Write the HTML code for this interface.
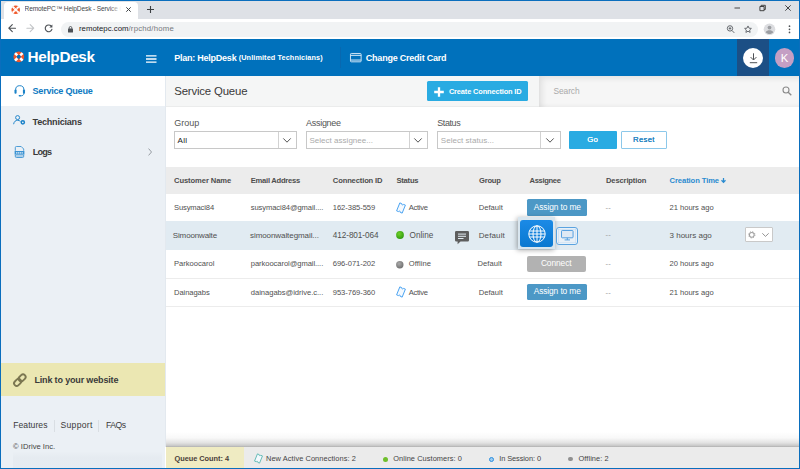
<!DOCTYPE html>
<html lang="en">
<head>
<meta charset="utf-8">
<title>RemotePC HelpDesk - Service Queue</title>
<style>
*{box-sizing:border-box;margin:0;padding:0}
html,body{width:800px;height:469px;overflow:hidden;background:#0a6ebd}
body{font-family:"Liberation Sans",sans-serif;font-size:8px;color:#444;position:relative}
.a{position:absolute}
.t{position:absolute;white-space:nowrap;line-height:1.15}
svg{position:absolute;overflow:visible}
#win{left:1px;top:1px;width:798px;height:467px;background:#fff;overflow:hidden}
/* browser chrome */
#tabstrip{left:0;top:0;width:798px;height:17.5px;background:#dee1e6}
#tab{left:3px;top:1px;width:134px;height:17px;background:#fff;border-radius:4px 4px 0 0}
#toolbar{left:0;top:17.5px;width:798px;height:20.5px;background:#fff}
#omni{left:60px;top:20.5px;width:697px;height:15px;border-radius:8px;background:#f1f3f4}
/* app header */
#hdr{left:0;top:38px;width:798px;height:37px;background:#0071bc}
#dl{left:736px;top:38px;width:32px;height:37px;background:#1c4f85}
#dlc{left:742px;top:47.400px;width:20px;height:20px;border-radius:50%;background:#fff}
#av{left:773.800px;top:47px;width:19.400px;height:19.600px;border-radius:50%;background:#c49fc4}
#hsep{left:339.300px;top:46px;width:1px;height:21px;background:#0868b0}
/* sidebar */
#side{left:0;top:75px;width:164px;height:392px;background:#ebf0f5}
#sel{left:0;top:75px;width:164px;height:30px;background:#fff}
#link{left:0;top:362.1px;width:164.2px;height:33px;background:#ebe7b2}
.vsep{width:1px;height:12px;background:#d9dee3;top:418.5px}
/* main */
#main{left:164px;top:75px;width:634px;height:392px;background:#fff}
#mborder{left:164.2px;top:75px;width:1px;height:371px;background:#e3e9ef}
#tbar{left:165px;top:75px;width:633px;height:30.5px;background:#f5f6f6 radial-gradient(rgba(0,0,0,.03) .5px,transparent .7px) 0 0/2px 2px;border-bottom:1px solid #ebecec}
#create{left:426px;top:80.3px;width:101.200px;height:20.200px;background:#29abe2;border-radius:1.5px}
#search{left:537.5px;top:75px;width:261px;height:30.5px;background:#f6f6f6;box-shadow:inset 4px 3px 6px -1px rgba(0,0,0,.09),inset 0 -2px 4px -1px rgba(0,0,0,.05)}
.sel{height:17.600px;top:130px;border:1px solid #c8c8c8;background:#fff}
.sel i{position:absolute;top:0;bottom:0;width:1px;background:#d2d2d2}
#go{left:568px;top:130px;width:48px;height:18px;background:#29abe2;border-radius:1px}
#reset{left:619.5px;top:130px;width:46.5px;height:18px;background:#fff;border:1px solid #8cc8ea;border-radius:1px}
#thead{left:164.8px;top:165.900px;width:633.2px;height:26.700px;background:#ececec radial-gradient(rgba(255,255,255,.25) .5px,transparent .7px) 0 0/2px 2px}
.row{left:164.8px;width:633.2px;border-bottom:1px solid #ececec}
#row2{left:164px;top:220.3px;width:634px;height:28.7px;background:#e1ebf2}
.btn{height:17px;border-radius:1.5px}
.assign{background:#4c98c6;left:526px;width:60px}
#connect{background:#b2b2b2;left:526.3px;width:59px;top:254.9px;height:16px;border-radius:2px}
#globehl{left:516.5px;top:216px;width:37.5px;height:32px;background:#d9e6ef;box-shadow:-1px 1px 5px rgba(0,0,0,.35)}
#globe{left:519px;top:219px;width:33px;height:27px;border-radius:3px;background:linear-gradient(#1b8ae6,#0a78d0)}
#mon{left:555.2px;top:225.8px;width:21.8px;height:18px;border-radius:3px;border:1px solid #5ba3e0;background:#e9f0f7;box-shadow:inset 0 0 0 .8px #f4f8fc,inset 0 0 0 1.6px #c3dcf3}
#gear{left:744.2px;top:226.2px;width:27.800px;height:14.600px;border:1px solid #c9c9c9;background:#fff;border-radius:1px}
/* status bar */
#sbshadow{left:164.5px;top:431px;width:634px;height:15px;background:linear-gradient(rgba(120,120,120,0),rgba(120,120,120,.05) 40%,rgba(110,110,110,.2) 72%,rgba(100,100,100,.34) 90%,rgba(90,90,90,.48))}
#sbar{left:164.5px;top:445.8px;width:634px;height:21.2px;background:#ebebeb}
#qc{left:164.5px;top:445.8px;width:78.8px;height:21.2px;background:#efebc2}
.dot{width:5px;height:5px;border-radius:50%}
</style>
</head>
<body>
<div id="win" class="a">
  <div id="tabstrip" class="a"></div>
  <div id="tab" class="a"></div>
  <div id="toolbar" class="a"></div>
  <div id="omni" class="a"></div>
  <div class="a" style="z-index:3;left:108px;top:3px;width:14px;height:13px;background:linear-gradient(90deg,rgba(255,255,255,0),#fff 90%)"></div>
    <!-- favicon lifebuoy -->
  <svg style="left:9.700px;top:3.900px" width="9.400" height="9.400" viewBox="-4.700 -4.700 9.400 9.400"><circle r="3" fill="#fff" stroke="#f0592a" stroke-width="2.600"/><path d="M1.20 1.20L3.08 3.08M-1.20 1.20L-3.08 3.08M-1.20 -1.20L-3.08 -3.08M1.20 -1.20L3.08 -3.08" stroke="#fff" stroke-width="1.900" fill="none"/></svg>
  <!-- tab close -->
  <svg style="left:125.300px;top:5.900px" width="5" height="5" viewBox="0 0 5 5"><path d="M.3.3 4.7 4.7M4.7.3.3 4.7" stroke="#3c4043" stroke-width="1" fill="none"/></svg>
  <!-- new tab plus -->
  <svg style="left:145.800px;top:4.900px" width="7" height="7" viewBox="0 0 7 7"><path d="M3.5 0V7M0 3.5H7" stroke="#3c4043" stroke-width="1.1" fill="none"/></svg>
  <!-- window controls -->
  <svg style="left:731px;top:2px" width="62" height="10" viewBox="0 0 62 10"><g fill="none" stroke="#333" stroke-width=".9"><path d="M2.5 5H8"/><path d="M27.9 3.5h4.2v4.2H27.900zM29.100 3.500V2.300h4.200v4.200h-1.200"/><path d="M53.3 2.3l5.4 5.4M58.700 2.3l-5.400 5.400"/></g></svg>
  <!-- back / forward / reload -->
  <svg style="left:7px;top:23px" width="46" height="9" viewBox="0 0 46 9"><g fill="none" stroke-width="1.15" stroke-linecap="round" stroke-linejoin="round"><path d="M7.500 4.200H.9M4.300 .7.800 4.200l3.500 3.500" stroke="#4d5156"/><path d="M18.900 4.200H25.600M22.200 .7l3.500 3.500-3.500 3.500" stroke="#c3c5c8"/><path d="M43.300 2.200A3.400 3.400 0 1 0 43.900 5.400" stroke="#4d5156"/></g><path d="M44.400 .5V3.500H41.400z" fill="#4d5156"/></svg>
  <!-- lock -->
  <svg style="left:66.600px;top:24.800px" width="5" height="7" viewBox="0 0 5 7"><rect x="0" y="2.600" width="5" height="4" rx=".6" fill="#4d5156"/><path d="M1.200 2.800V1.800a1.300 1.300 0 0 1 2.600 0v1" fill="none" stroke="#4d5156" stroke-width=".9"/></svg>
  <!-- zoom, star, profile, menu -->
  <svg style="left:724px;top:22px" width="72" height="13" viewBox="0 0 72 13"><g fill="none" stroke="#5f6368" stroke-width=".95"><circle cx="5" cy="5.400" r="2.700"/><path d="M7 7.500 9.300 9.900M3.700 5.400H6.300M5 4.100V6.700"/><path transform="translate(23 6.200) scale(.88) translate(-23 -6)" d="M23 2.300l1.150 2.500 2.700.3-2 1.850.55 2.700L23 8.300l-2.400 1.350.55-2.700-2-1.850 2.700-.3z" stroke-linejoin="round" stroke-width="1.050"/></g><circle cx="44.500" cy="6.300" r="5.800" fill="#dcdde0"/><circle cx="44.500" cy="4.600" r="1.900" fill="#9c9ea2"/><path d="M40.700 9.200c.8-1.500 2.200-2 3.800-2s3 .5 3.800 2c-1 1.200-2.300 1.800-3.800 1.800s-2.800-.6-3.800-1.800z" fill="#9c9ea2"/><g fill="#4d5156"><circle cx="64.500" cy="3.200" r=".85"/><circle cx="64.500" cy="6.300" r=".85"/><circle cx="64.500" cy="9.400" r=".85"/></g></svg>

  <div id="hdr" class="a"></div>
  <div id="dl" class="a"></div>
  <div id="dlc" class="a"></div>
  <div id="av" class="a"></div>
  <div id="hsep" class="a"></div>
    <!-- logo lifebuoy -->
  <svg style="left:12.100px;top:49.950px" width="11.600" height="11.600" viewBox="-5.800 -5.800 11.600 11.600"><circle r="3.700" fill="none" stroke="#f0562a" stroke-width="3.300"/><path d="M1.45 1.45L3.78 3.78M-1.45 1.45L-3.78 3.78M-1.45 -1.45L-3.78 -3.78M1.45 -1.45L3.78 -3.78" stroke="#fff" stroke-width="2.500" fill="none"/></svg>
  <!-- hamburger -->
  <svg style="left:145px;top:54px" width="11" height="8" viewBox="0 0 11 8"><path d="M0 .8H10.500M0 4H10.500M0 7.200H10.500" stroke="#fff" stroke-width="1.300" fill="none"/></svg>
  <!-- credit card -->
  <svg style="left:349.200px;top:52.200px" width="11.600" height="9.300" viewBox="0 0 12.500 10"><rect x=".5" y=".5" width="11.500" height="9" rx=".9" fill="none" stroke="#d9ebf8" stroke-width="1"/><path d="M.5 2.500H12" stroke="#d9ebf8" stroke-width="1.100"/><path d="M.5 7.600H12" stroke="#b5d6ef" stroke-width="1.300"/></svg>
  <!-- download -->
  <svg style="left:747.500px;top:51.500px" width="9" height="11" viewBox="0 0 9 11"><path d="M4.500 .3V6.800M1.600 4.100 4.500 7 7.400 4.100M.8 9.700H8.200" fill="none" stroke="#46494d" stroke-width=".95"/></svg>

  <div id="side" class="a"></div>
  <div id="sel" class="a"></div>
  <div id="link" class="a"></div>
  <div class="a" style="left:12px;top:450px;width:149px;height:17px;background:linear-gradient(rgba(0,0,0,0),rgba(40,60,90,.028) 40%)"></div>
  <div class="a vsep" style="left:52.9px"></div>
  <div class="a vsep" style="left:97.400px"></div>
    <!-- headset -->
  <svg style="left:12.600px;top:84.200px" width="11.500" height="12" viewBox="0 0 12 12.500"><path d="M1.700 5.600V5A4.300 4.300 0 0 1 10.300 5v.6" fill="none" stroke="#1a82c8" stroke-width="1"/><rect x=".5" y="4.600" width="2.200" height="4.400" rx="1" fill="#1a82c8"/><rect x="9.300" y="4.600" width="2.200" height="4.400" rx="1" fill="#1a82c8"/><path d="M10.300 8.600c0 1.800-1.200 2.700-3.300 2.800" fill="none" stroke="#1a82c8" stroke-width=".9"/><rect x="4.800" y="10.500" width="2.600" height="1.600" rx=".8" fill="#1a82c8"/></svg>
  <!-- technicians -->
  <svg style="left:12.300px;top:114px" width="13" height="10" viewBox="0 0 13 10"><g fill="none" stroke="#1a82c8"><circle cx="4.600" cy="2.600" r="2" stroke-width=".95"/><path d="M.6 9.200C1.100 6.400 2.700 5.300 4.600 5.300c1.200 0 2.100.4 2.800 1.100" stroke-width=".95"/><circle cx="9.800" cy="7.300" r="1.600" stroke-width="1.500"/></g></svg>
  <!-- logs -->
  <svg style="left:12.500px;top:144.800px" width="11" height="12" viewBox="0 0 11 12"><path d="M1.300 4.800V1.600Q1.300 .5 2.400 .5H7.200L9.700 3V4.800M9.700 9v1.400q0 1.100-1.100 1.100H2.400q-1.100 0-1.100-1.100V9" fill="none" stroke="#3b93d3" stroke-width=".9"/><rect x=".6" y="5" width="9.800" height="3.700" fill="#3b93d3"/><path d="M1.300 10H9.700" stroke="#3b93d3" stroke-width=".7"/><path d="M2 6.850H9" stroke="#e6f0f8" stroke-width="1.300" stroke-dasharray="1.300 .55"/></svg>
  <!-- chevron -->
  <svg style="left:146.800px;top:146.800px" width="4" height="8" viewBox="0 0 4 8"><path d="M.6 .6 3.500 4 .6 7.400" fill="none" stroke="#8d9399" stroke-width=".9"/></svg>
  <!-- link -->
  <svg style="left:12px;top:371.500px" width="13" height="14" viewBox="0 0 13 14"><g fill="none" stroke="#7b7651" stroke-width="1.850"><rect x="-2.600" y="-3.900" width="5.200" height="7.800" rx="2.600" transform="translate(9.100 4.900) rotate(45)"/><rect x="-2.600" y="-3.900" width="5.200" height="7.800" rx="2.600" transform="translate(4.600 9.400) rotate(45)"/></g></svg>

  <div id="main" class="a"></div>
  <div id="tbar" class="a"></div>
  <div id="search" class="a"></div>
  <div id="create" class="a"></div>
  <div class="a sel" style="left:173px;width:122.800px"><i style="left:103px"></i></div>
  <div class="a sel" style="left:304.5px;width:122.300px"><i style="left:102.600px"></i></div>
  <div class="a sel" style="left:435.5px;width:124px"><i style="left:102.600px"></i></div>
  <div id="go" class="a"></div>
  <div id="reset" class="a"></div>
  <div id="thead" class="a"></div>
  <div class="a row" style="top:193px;height:28px"></div>
  <div class="a row" style="top:249px;height:28.5px"></div>
  <div class="a row" style="top:277.5px;height:28.5px"></div>
  <div id="row2" class="a"></div>
  <div id="mborder" class="a"></div>
  <div class="a btn assign" style="top:198px;height:16.8px"></div>
  <div class="a btn assign" style="top:282.6px;height:16.9px"></div>
  <div id="connect" class="a btn"></div>
  <div id="globehl" class="a"></div>
  <div id="globe" class="a"></div>
  <div id="mon" class="a"></div>
  <div id="gear" class="a"></div>
  <div id="sbshadow" class="a"></div>
  <div id="sbar" class="a"></div>
  <div id="qc" class="a"></div>
  <div class="a dot" style="left:382px;top:455.5px;background:#6fbf2c"></div>
  <div class="a dot" style="left:488px;top:455.5px;border:1.700px solid #2a8fe0;background:#9ccbf0"></div>
  <div class="a dot" style="left:567.200px;top:455.700px;width:4.500px;height:4.500px;background:#909090"></div>
    <!-- plus -->
  <svg style="left:432.500px;top:85.500px" width="10" height="10" viewBox="0 0 10 10"><path d="M5 .2V9.800M.2 5H9.800" stroke="#fff" stroke-width="2.300" fill="none"/></svg>
  <!-- magnifier -->
  <svg style="left:780.700px;top:85.300px" width="10" height="10" viewBox="0 0 10 10"><circle cx="4" cy="4" r="3" fill="none" stroke="#8a8a8a" stroke-width="1.100"/><path d="M6.200 6.200 9.300 9.300" stroke="#8a8a8a" stroke-width="1.300"/></svg>
  <!-- select chevrons -->
  <svg style="left:282px;top:137px" width="8" height="5" viewBox="0 0 8 5"><path d="M.3 .4 4 4.200 7.700 .4" fill="none" stroke="#555" stroke-width="1"/></svg>
  <svg style="left:413.200px;top:137px" width="8" height="5" viewBox="0 0 8 5"><path d="M.3 .4 4 4.200 7.700 .4" fill="none" stroke="#555" stroke-width="1"/></svg>
  <svg style="left:545px;top:137px" width="8" height="5" viewBox="0 0 8 5"><path d="M.3 .4 4 4.200 7.700 .4" fill="none" stroke="#555" stroke-width="1"/></svg>
  <!-- sort arrow -->
  <svg style="left:720.400px;top:176.700px" width="5" height="5" viewBox="0 0 5 5"><path d="M2.500 0V4.300M.5 2.300 2.500 4.400 4.500 2.300" fill="none" stroke="#2a8bd0" stroke-width="1.250"/></svg>
  <!-- active icons -->
  <svg style="left:394.600px;top:201.600px" width="10" height="10" viewBox="0 0 10 10"><g transform="translate(5 5) rotate(22)"><path d="M-3-4.300H-.9A.9 .9 0 0 0 .9-4.300H3V4.300H.9A.9 .9 0 0 0-.9 4.300H-3z" fill="#f4f9fe" stroke="#3f9ef0" stroke-width=".85" stroke-linejoin="round"/></g></svg>
  <svg style="left:394.500px;top:286px" width="10" height="10" viewBox="0 0 10 10"><g transform="translate(5 5) rotate(22)"><path d="M-3-4.300H-.9A.9 .9 0 0 0 .9-4.300H3V4.300H.9A.9 .9 0 0 0-.9 4.300H-3z" fill="#f4f9fe" stroke="#3f9ef0" stroke-width=".85" stroke-linejoin="round"/></g></svg>
  <svg style="left:253px;top:453px" width="9" height="9" viewBox="0 0 10 10"><g transform="translate(5 5) rotate(22)"><path d="M-3-4.300H-.9A.9 .9 0 0 0 .9-4.300H3V4.300H.9A.9 .9 0 0 0-.9 4.300H-3z" fill="#f4f9fe" stroke="#4fb3ad" stroke-width=".85" stroke-linejoin="round"/></g></svg>
  <!-- status dots -->
  <svg style="left:395px;top:230.300px" width="8" height="8" viewBox="0 0 8 8"><defs><radialGradient id="gg" cx=".4" cy=".35" r=".7"><stop offset="0" stop-color="#6fd02a"/><stop offset="1" stop-color="#2f9a10"/></radialGradient><radialGradient id="gr" cx=".4" cy=".35" r=".7"><stop offset="0" stop-color="#aaa"/><stop offset="1" stop-color="#6c6c6c"/></radialGradient></defs><circle cx="4" cy="4" r="3.900" fill="url(#gg)"/></svg>
  <svg style="left:395.300px;top:259.500px" width="7.600" height="7.600" viewBox="0 0 8 8"><circle cx="4" cy="4" r="3.900" fill="url(#gr)"/></svg>
  <!-- chat -->
  <svg style="left:454.200px;top:230px" width="14" height="14" viewBox="0 0 14 14"><path d="M1.200 0H12.800Q14 0 14 1.200V9.300Q14 10.500 12.800 10.500H5.500L2.600 13.300V10.500H1.200Q0 10.500 0 9.300V1.200Q0 0 1.200 0z" fill="#5e5e5e"/><path d="M3 3.100H11M3 5.300H11M3 7.500H8.500" stroke="#e1ebf2" stroke-width="1"/></svg>
  <!-- globe -->
  <svg style="left:526.500px;top:223.500px" width="18" height="18" viewBox="-9 -9 18 18"><g fill="none" stroke="#fff" stroke-width="1"><circle r="8.200"/><ellipse rx="4" ry="8.200"/><path d="M0-8V8M-8 0H8M-7.500-3H7.500M-7.500 3H7.500"/></g></svg>
  <!-- monitor -->
  <svg style="left:559.600px;top:229.200px" width="12.600" height="10.600" viewBox="0 0 13 11"><rect x=".5" y=".5" width="12" height="7.600" rx=".8" fill="#dfe9f4" stroke="#3f93dc" stroke-width=".9"/><path d="M6.500 8.200V10.200M3.700 10.300H9.300" stroke="#3f93dc" stroke-width=".9" fill="none"/></svg>
  <!-- gear + chevron -->
  <svg style="left:747px;top:230.100px" width="7.600" height="7.600" viewBox="-4 -4 8 8"><circle r="2.500" fill="none" stroke="#a0a0a0" stroke-width="1.100"/><circle r="3.300" fill="none" stroke="#a0a0a0" stroke-width="1" stroke-dasharray="1.300 1.290"/></svg>
  <svg style="left:761.200px;top:232.300px" width="7" height="4" viewBox="0 0 7 4"><path d="M.3 .3 3.500 3.400 6.700 .3" fill="none" stroke="#777" stroke-width=".8"/></svg>

<span class="t" id="t0" style="left:23.50px;top:4.30px;font-size:6.60px;font-weight:400;color:#45484c;letter-spacing:-0.136px;overflow:hidden;width:98px;">RemotePC™ HelpDesk - Service Q</span>
<span class="t" id="t1" style="left:78.00px;top:24.41px;font-size:7.80px;font-weight:400;color:#202124;letter-spacing:0.008px;">remotepc.com</span>
<span class="t" id="t2" style="left:127.50px;top:24.41px;font-size:7.80px;font-weight:400;color:#75787c;letter-spacing:0.196px;">/rpchd/home</span>
<span class="t" id="t3" style="left:26.50px;top:46.90px;font-size:15.30px;font-weight:700;color:#fff;letter-spacing:-0.312px;">HelpDesk</span>
<span class="t" id="t4" style="left:173.20px;top:52.12px;font-size:9.00px;font-weight:700;color:#fff;letter-spacing:-0.236px;">Plan: HelpDesk</span>
<span class="t" id="t5" style="left:237.70px;top:53.40px;font-size:7.30px;font-weight:700;color:#fff;letter-spacing:0.100px;">(Unlimited Technicians)</span>
<span class="t" id="t6" style="left:364.80px;top:52.12px;font-size:9.00px;font-weight:700;color:#fff;letter-spacing:-0.222px;">Change Credit Card</span>
<span class="t" id="t7" style="left:779.80px;top:50.80px;font-size:11.30px;font-weight:400;color:#fff;letter-spacing:-0.500px;">K</span>
<span class="t" id="t8" style="left:31.50px;top:85.47px;font-size:9.10px;font-weight:700;color:#0d79c2;letter-spacing:-0.245px;">Service Queue</span>
<span class="t" id="t9" style="left:31.50px;top:116.07px;font-size:9.10px;font-weight:700;color:#3a3a3a;letter-spacing:-0.245px;">Technicians</span>
<span class="t" id="t10" style="left:31.75px;top:146.37px;font-size:9.10px;font-weight:700;color:#3a3a3a;letter-spacing:-0.812px;">Logs</span>
<span class="t" id="t11" style="left:33.40px;top:373.82px;font-size:9.00px;font-weight:700;color:#3a3a3a;letter-spacing:-0.156px;">Link to your website</span>
<span class="t" id="t12" style="left:12.20px;top:419.56px;font-size:8.60px;font-weight:400;color:#3a3a3a;letter-spacing:0.050px;">Features</span>
<span class="t" id="t13" style="left:59.50px;top:419.56px;font-size:8.60px;font-weight:400;color:#3a3a3a;letter-spacing:0.299px;">Support</span>
<span class="t" id="t14" style="left:104.90px;top:419.56px;font-size:8.60px;font-weight:400;color:#3a3a3a;letter-spacing:-0.475px;">FAQs</span>
<span class="t" id="t15" style="left:12.10px;top:441.83px;font-size:7.60px;font-weight:400;color:#444;letter-spacing:0.008px;">© IDrive Inc.</span>
<span class="t" id="t16" style="left:173.30px;top:83.65px;font-size:11.40px;font-weight:400;color:#3a3a3a;letter-spacing:-0.181px;">Service Queue</span>
<span class="t" id="t17" style="left:447.90px;top:87.05px;font-size:7.40px;font-weight:700;color:#fff;letter-spacing:-0.128px;">Create Connection ID</span>
<span class="t" id="t18" style="left:552.50px;top:85.57px;font-size:8.40px;font-weight:400;color:#a9a9a9;letter-spacing:-0.083px;">Search</span>
<span class="t" id="t19" style="left:173.30px;top:117.12px;font-size:9.00px;font-weight:400;color:#555;letter-spacing:-0.043px;">Group</span>
<span class="t" id="t20" style="left:305.00px;top:117.12px;font-size:9.00px;font-weight:400;color:#555;letter-spacing:-0.279px;">Assignee</span>
<span class="t" id="t21" style="left:436.20px;top:117.12px;font-size:9.00px;font-weight:400;color:#555;letter-spacing:-0.400px;">Status</span>
<span class="t" id="t22" style="left:176.60px;top:134.84px;font-size:8.10px;font-weight:400;color:#222;letter-spacing:0.200px;">All</span>
<span class="t" id="t23" style="left:308.50px;top:134.70px;font-size:8.00px;font-weight:400;color:#aaa;letter-spacing:0.019px;">Select assignee...</span>
<span class="t" id="t24" style="left:439.80px;top:134.70px;font-size:8.00px;font-weight:400;color:#aaa;letter-spacing:0.046px;">Select status...</span>
<span class="t" id="t25" style="left:586.30px;top:134.51px;font-size:7.80px;font-weight:400;color:#fff;letter-spacing:0.247px;text-shadow:0 0 .4px #fff;">Go</span>
<span class="t" id="t26" style="left:632.00px;top:134.51px;font-size:7.80px;font-weight:400;color:#1f7fc0;letter-spacing:0.285px;text-shadow:0 0 .3px #1f7fc0;">Reset</span>
<span class="t" id="t27" style="left:173.00px;top:175.93px;font-size:7.60px;font-weight:700;color:#4e4e4e;letter-spacing:-0.081px;">Customer Name</span>
<span class="t" id="t28" style="left:249.80px;top:175.93px;font-size:7.60px;font-weight:700;color:#4e4e4e;letter-spacing:-0.253px;">Email Address</span>
<span class="t" id="t29" style="left:331.80px;top:175.93px;font-size:7.60px;font-weight:700;color:#4e4e4e;letter-spacing:-0.144px;">Connection ID</span>
<span class="t" id="t30" style="left:395.40px;top:175.93px;font-size:7.60px;font-weight:700;color:#4e4e4e;letter-spacing:-0.203px;">Status</span>
<span class="t" id="t31" style="left:478.00px;top:175.93px;font-size:7.60px;font-weight:700;color:#4e4e4e;letter-spacing:-0.240px;">Group</span>
<span class="t" id="t32" style="left:528.60px;top:175.93px;font-size:7.60px;font-weight:700;color:#4e4e4e;letter-spacing:-0.350px;">Assignee</span>
<span class="t" id="t33" style="left:605.00px;top:175.93px;font-size:7.60px;font-weight:700;color:#4e4e4e;letter-spacing:-0.145px;">Description</span>
<span class="t" id="t34" style="left:668.60px;top:175.93px;font-size:7.60px;font-weight:700;color:#2a8bd0;letter-spacing:-0.085px;">Creation Time</span>
<span class="t" id="t35" style="left:173.00px;top:203.23px;font-size:7.60px;font-weight:400;color:#505050;letter-spacing:-0.138px;">Susymaci84</span>
<span class="t" id="t36" style="left:249.80px;top:203.23px;font-size:7.60px;font-weight:400;color:#505050;letter-spacing:-0.100px;">susymaci84@gmail....</span>
<span class="t" id="t37" style="left:331.80px;top:203.23px;font-size:7.60px;font-weight:400;color:#505050;letter-spacing:-0.062px;">162-385-559</span>
<span class="t" id="t38" style="left:407.80px;top:203.23px;font-size:7.60px;font-weight:400;color:#505050;letter-spacing:-0.300px;">Active</span>
<span class="t" id="t39" style="left:477.70px;top:203.23px;font-size:7.60px;font-weight:400;color:#505050;letter-spacing:0.034px;">Default</span>
<span class="t" id="t40" style="left:532.80px;top:202.07px;font-size:8.40px;font-weight:400;color:#fff;letter-spacing:-0.118px;">Assign to me</span>
<span class="t" id="t41" style="left:604.60px;top:203.23px;font-size:7.60px;font-weight:400;color:#999;letter-spacing:0.169px;">--</span>
<span class="t" id="t42" style="left:668.50px;top:203.23px;font-size:7.60px;font-weight:400;color:#505050;letter-spacing:-0.020px;">21 hours ago</span>
<span class="t" id="t43" style="left:171.80px;top:229.80px;font-size:8.00px;font-weight:400;color:#505050;letter-spacing:-0.145px;">Simoonwalte</span>
<span class="t" id="t44" style="left:249.00px;top:229.80px;font-size:8.00px;font-weight:400;color:#505050;letter-spacing:-0.076px;">simoonwaltegmail...</span>
<span class="t" id="t45" style="left:331.80px;top:229.69px;font-size:8.20px;font-weight:400;color:#505050;letter-spacing:-0.076px;">412-801-064</span>
<span class="t" id="t46" style="left:408.60px;top:229.69px;font-size:8.20px;font-weight:400;color:#505050;letter-spacing:0.000px;">Online</span>
<span class="t" id="t47" style="left:477.70px;top:229.80px;font-size:8.00px;font-weight:400;color:#505050;letter-spacing:0.134px;">Default</span>
<span class="t" id="t48" style="left:604.60px;top:230.03px;font-size:7.60px;font-weight:400;color:#999;letter-spacing:0.169px;">--</span>
<span class="t" id="t49" style="left:668.50px;top:229.80px;font-size:8.00px;font-weight:400;color:#505050;letter-spacing:0.003px;">3 hours ago</span>
<span class="t" id="t50" style="left:173.00px;top:259.23px;font-size:7.60px;font-weight:400;color:#505050;letter-spacing:-0.018px;">Parkoocarol</span>
<span class="t" id="t51" style="left:249.80px;top:259.23px;font-size:7.60px;font-weight:400;color:#505050;letter-spacing:-0.076px;">parkoocarol@gmail....</span>
<span class="t" id="t52" style="left:331.80px;top:259.23px;font-size:7.60px;font-weight:400;color:#505050;letter-spacing:-0.062px;">696-071-202</span>
<span class="t" id="t53" style="left:407.80px;top:259.23px;font-size:7.60px;font-weight:400;color:#505050;letter-spacing:0.057px;">Offline</span>
<span class="t" id="t54" style="left:476.40px;top:259.23px;font-size:7.60px;font-weight:400;color:#505050;letter-spacing:0.077px;">Default</span>
<span class="t" id="t55" style="left:539.90px;top:258.27px;font-size:8.40px;font-weight:400;color:#fff;letter-spacing:-0.086px;">Connect</span>
<span class="t" id="t56" style="left:604.60px;top:259.23px;font-size:7.60px;font-weight:400;color:#999;letter-spacing:0.169px;">--</span>
<span class="t" id="t57" style="left:668.50px;top:259.23px;font-size:7.60px;font-weight:400;color:#505050;letter-spacing:-0.020px;">20 hours ago</span>
<span class="t" id="t58" style="left:173.00px;top:287.53px;font-size:7.60px;font-weight:400;color:#505050;letter-spacing:-0.079px;">Dainagabs</span>
<span class="t" id="t59" style="left:249.80px;top:287.53px;font-size:7.60px;font-weight:400;color:#505050;letter-spacing:-0.035px;">dainagabs@idrive.c...</span>
<span class="t" id="t60" style="left:331.80px;top:287.53px;font-size:7.60px;font-weight:400;color:#505050;letter-spacing:-0.062px;">953-769-360</span>
<span class="t" id="t61" style="left:407.80px;top:287.53px;font-size:7.60px;font-weight:400;color:#505050;letter-spacing:-0.300px;">Active</span>
<span class="t" id="t62" style="left:477.70px;top:287.53px;font-size:7.60px;font-weight:400;color:#505050;letter-spacing:0.034px;">Default</span>
<span class="t" id="t63" style="left:532.70px;top:286.47px;font-size:8.40px;font-weight:400;color:#fff;letter-spacing:-0.110px;">Assign to me</span>
<span class="t" id="t64" style="left:604.60px;top:287.53px;font-size:7.60px;font-weight:400;color:#999;letter-spacing:0.169px;">--</span>
<span class="t" id="t65" style="left:668.50px;top:287.53px;font-size:7.60px;font-weight:400;color:#505050;letter-spacing:-0.020px;">21 hours ago</span>
<span class="t" id="t66" style="left:173.50px;top:453.94px;font-size:7.40px;font-weight:700;color:#4a403a;letter-spacing:-0.038px;">Queue Count: 4</span>
<span class="t" id="t67" style="left:265.00px;top:453.94px;font-size:7.40px;font-weight:400;color:#444;letter-spacing:0.080px;">New Active Connections: 2</span>
<span class="t" id="t68" style="left:392.20px;top:453.94px;font-size:7.40px;font-weight:400;color:#444;letter-spacing:0.075px;">Online Customers: 0</span>
<span class="t" id="t69" style="left:498.20px;top:453.94px;font-size:7.40px;font-weight:400;color:#444;letter-spacing:-0.077px;">In Session: 0</span>
<span class="t" id="t70" style="left:577.40px;top:453.94px;font-size:7.40px;font-weight:400;color:#444;letter-spacing:0.095px;">Offline: 2</span>
</div>
</body>
</html>
